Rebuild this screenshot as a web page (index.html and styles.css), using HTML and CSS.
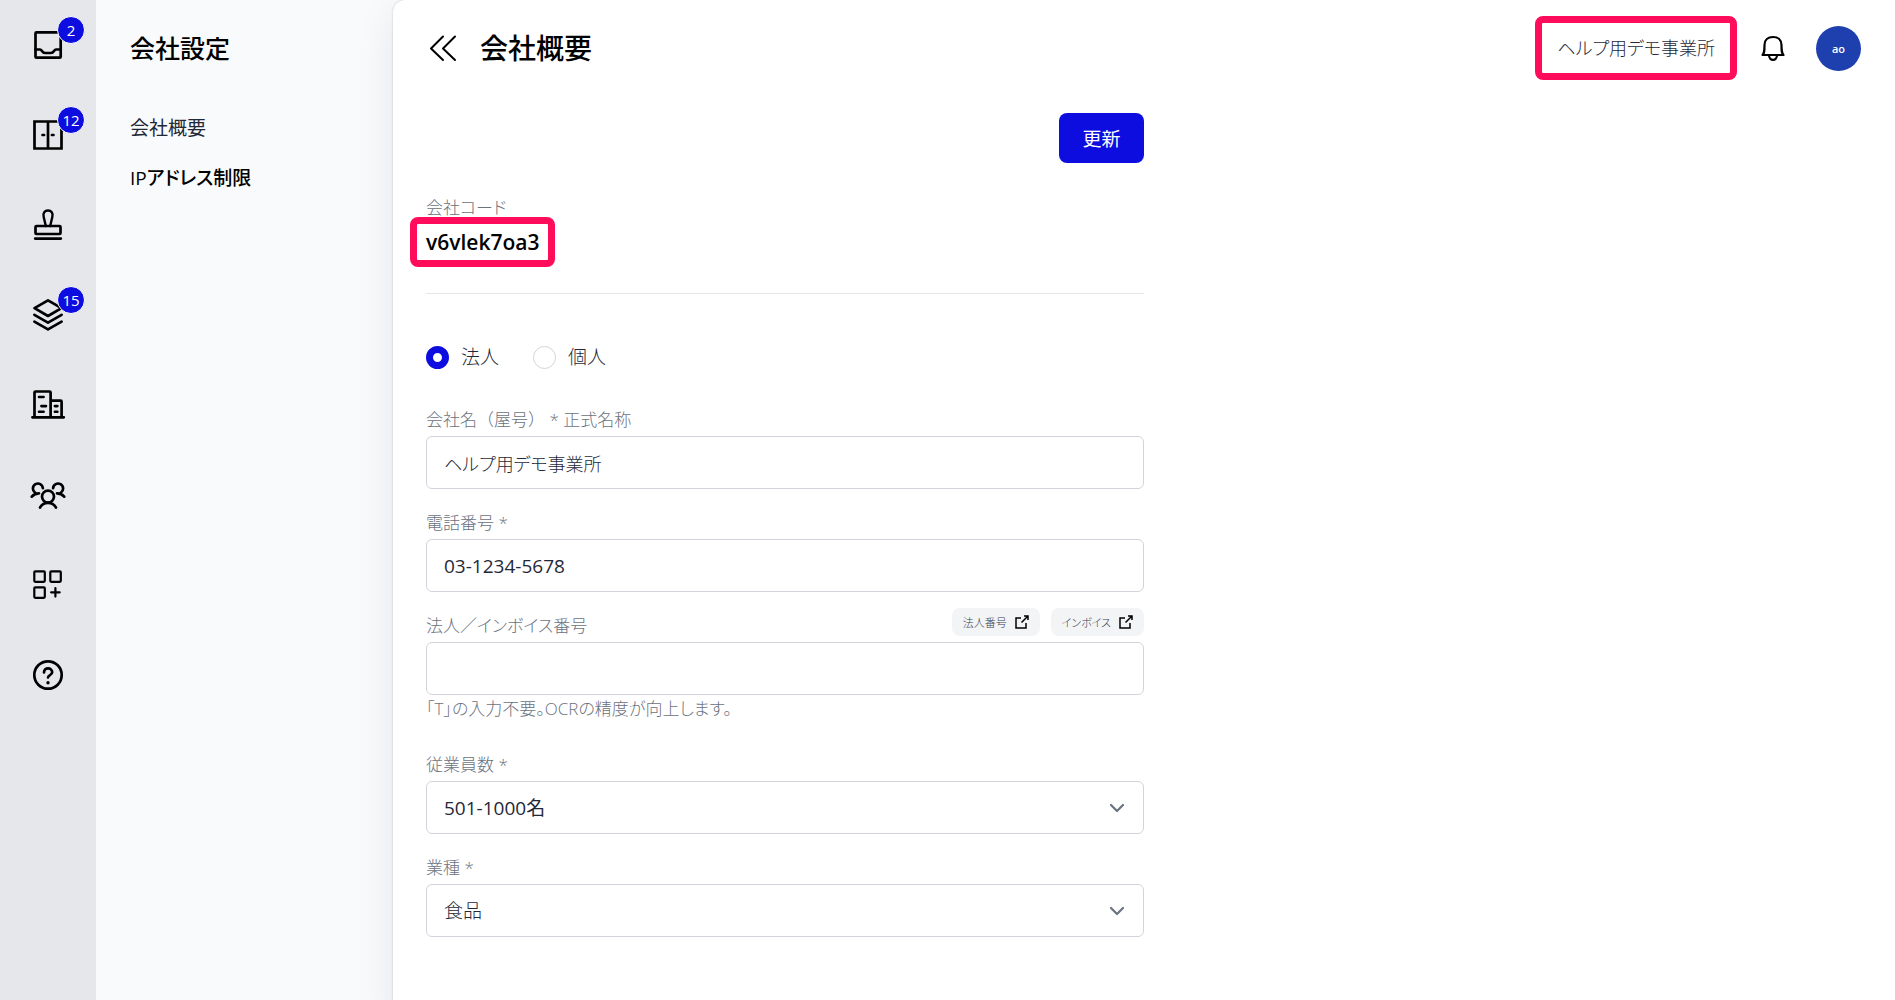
FILE: index.html
```html
<!DOCTYPE html>
<html lang="ja">
<head>
    <meta charset="UTF-8">
    <meta name="viewport" content="width=device-width, initial-scale=1">
    <title>会社概要</title>
    <link rel="stylesheet" href="styles.css">
</head>
<body>
    <div class="app">
        <nav class="rail">
            <a href="#" class="rail-link" aria-label="受信箱">
                <svg viewBox="0 0 36 36" class="icon">
                    <rect x="5.5" y="5.3" width="25.2" height="25.4" rx="1"/>
                    <path d="M5.5 22.5H10C12 22.5 12 26 15 26H21C24 26 24 22.5 26 22.5H30.5"/>
                </svg>
                <span class="badge">2</span>
            </a>
            <a href="#" class="rail-link" aria-label="書庫">
                <svg viewBox="0 0 36 36" class="icon">
                    <path d="M4.5 4.5H31.5V31.5H4.5ZM18 4.5V31.5" stroke-linejoin="miter"/>
                    <path d="M12.4 18H14.2M21.8 18H23.6" stroke-width="2.4"/>
                </svg>
                <span class="badge">12</span>
            </a>
            <a href="#" class="rail-link" aria-label="承認">
                <svg viewBox="0 0 36 36" class="icon">
                    <path d="M15.8 19L13.7 10C12.6 6 14.8 3.5 18 3.5S23.4 6 22.3 10L20.2 19" stroke-width="2.4"/>
                    <rect x="5.5" y="19" width="25" height="8" rx="1"/>
                    <path d="M5.2 31.6H30.8"/>
                </svg>
            </a>
            <a href="#" class="rail-link" aria-label="レイヤー">
                <svg viewBox="0 0 36 36" class="icon">
                    <path d="M18 3.3L31.5 11.2L18 19L4.5 11.2Z"/>
                    <path d="M4.4 17.8L18 25.7L31.6 17.8M4.4 24.7L18 32.4L31.6 24.7"/>
                </svg>
                <span class="badge">15</span>
            </a>
            <a href="#" class="rail-link" aria-label="会社">
                <svg viewBox="0 0 36 36" class="icon">
                    <path d="M4.5 30.3V5.5Q4.5 4.5 5.5 4.5H19.6Q20.6 4.5 20.6 5.5V30.3M20.6 13.7H30.6Q31.6 13.7 31.6 14.7V30.3M2.4 30.3H33.8"/>
                    <path d="M9 10H13.6M11.4 19.1H16M9 24.7H13.6M24.9 19.1H27.4M24.9 24.7H27.4" stroke-width="2.6"/>
                </svg>
            </a>
            <a href="#" class="rail-link" aria-label="メンバー">
                <svg viewBox="0 0 36 36" class="icon">
                    <circle cx="18" cy="19.6" r="6"/>
                    <path d="M10 30.6C11.5 27.5 14 25.8 18 25.8S24.5 27.5 26 30.6"/>
                    <path d="M12.9 11.2A5 5 0 1 0 5 15.6M9 16.3C5.5 16.3 3.5 17.6 1.8 19.6"/>
                    <path d="M23.1 11.2A5 5 0 1 1 31 15.6M27 16.3C30.5 16.3 32.5 17.6 34.2 19.6"/>
                </svg>
            </a>
            <a href="#" class="rail-link" aria-label="アプリ追加">
                <svg viewBox="0 0 36 36" class="icon icon-thin">
                    <rect x="4.3" y="4.3" width="10.5" height="10.5" rx="1"/>
                    <rect x="20.3" y="4.3" width="10.5" height="10.5" rx="1"/>
                    <rect x="4.3" y="20.3" width="10.5" height="10.5" rx="1"/>
                    <path d="M25.4 21V29.6M21.1 25.3H29.7"/>
                </svg>
            </a>
            <a href="#" class="rail-link" aria-label="ヘルプ">
                <svg viewBox="0 0 36 36" class="icon">
                    <circle cx="18" cy="18" r="13.7"/>
                    <path d="M14 15.5C14 9.8 22.2 10.3 22.2 15.3C22.2 18.3 18 17.8 18 20.5"/>
                    <path d="M18 25.7V25.8" stroke-width="3.4"/>
                </svg>
            </a>
        </nav>

        <aside class="submenu">
            <h2 class="submenu-title">会社設定</h2>
            <a href="#" class="submenu-link">会社概要</a>
            <a href="#" class="submenu-link strong">IPアドレス制限</a>
        </aside>

        <main class="main">
            <header class="header">
                <button type="button" class="icon-button" aria-label="戻る">
                    <svg viewBox="0 0 28 28" class="collapse-icon">
                        <path d="M14 2.5L2 14.5L14 26M26 2.5L14 14.5L26 26"/>
                    </svg>
                </button>
                <h1 class="page-title">会社概要</h1>
                <div class="header-right">
                    <span class="mark office">ヘルプ用デモ事業所</span>
                    <button type="button" class="icon-button" aria-label="通知">
                        <svg viewBox="0 0 28 28" class="bell-icon">
                            <path d="M3.5 21C5.5 19 5.5 17 5.5 11C5.5 6 9 3 14 3S22.5 6 22.5 11C22.5 17 22.5 19 24.5 21Z"/>
                            <path d="M10 21C10 27.5 18 27.5 18 21"/>
                        </svg>
                    </button>
                    <button type="button" class="avatar">ao</button>
                </div>
            </header>

            <form class="form">
                <div class="actions">
                    <button type="submit" class="submit">更新</button>
                </div>

                <div class="code">
                    <div class="label">会社コード</div>
                    <div class="mark code-value">v6vlek7oa3</div>
                </div>

                <div class="radios">
                    <label class="radio"><input type="radio" name="kind" checked>法人</label>
                    <label class="radio"><input type="radio" name="kind">個人</label>
                </div>

                <div class="field">
                    <label class="label full" for="company">会社名（屋号） * 正式名称</label>
                    <input class="control name" id="company" type="text" value="ヘルプ用デモ事業所">
                </div>
                <div class="field">
                    <label class="label" for="tel">電話番号 *</label>
                    <input class="control" id="tel" type="tel" value="03-1234-5678">
                </div>
                <div class="field">
                    <div class="label-row">
                        <label class="label" for="number">法人／インボイス番号</label>
                        <div class="chips">
                            <a href="#" class="chip">法人番号
                                <svg viewBox="0 0 14 14" class="link-icon"><path d="M6 3H1V13H11V8M9 1H13V5M13 1L6.5 7.5"/></svg>
                            </a>
                            <a href="#" class="chip">インボイス
                                <svg viewBox="0 0 14 14" class="link-icon"><path d="M6 3H1V13H11V8M9 1H13V5M13 1L6.5 7.5"/></svg>
                            </a>
                        </div>
                    </div>
                    <input class="control" id="number" type="text">
                    <p class="help">「T」の入力不要。OCRの精度が向上します。</p>
                </div>
                <div class="field">
                    <label class="label" for="employees">従業員数 *</label>
                    <div class="select">
                        <select class="control" id="employees"><option>501-1000名</option></select>
                        <svg viewBox="0 0 16 16" class="chevron"><path d="M2 5L8 11L14 5"/></svg>
                    </div>
                </div>
                <div class="field">
                    <label class="label" for="industry">業種 *</label>
                    <div class="select">
                        <select class="control light" id="industry"><option>食品</option></select>
                        <svg viewBox="0 0 16 16" class="chevron"><path d="M2 5L8 11L14 5"/></svg>
                    </div>
                </div>
            </form>
        </main>
    </div>
</body>
</html>
```
FILE: styles.css
```css
* {
    box-sizing: border-box;
}

body {
    margin: 0;
    font-family: "Open Sans", "Noto Sans CJK JP", sans-serif;
    font-size: 19px;
    font-feature-settings: "palt";
    color: #1f2937;
    background-color: #f9fafc;
}

h1, h2, p {
    margin: 0;
}

a {
    color: inherit;
    text-decoration: none;
}

button, input, select {
    font: inherit;
    font-feature-settings: inherit;
    color: inherit;
}

button {
    padding: 0;
    border: 0;
    background: none;
    cursor: pointer;
}

svg {
    display: block;
    fill: none;
    stroke: #000;
    stroke-linecap: round;
    stroke-linejoin: round;
}

.app {
    display: flex;
    min-height: 100vh;
}

/* left icon rail */
.rail {
    display: flex;
    flex-direction: column;
    align-items: center;
    gap: 54px;
    width: 96px;
    padding-top: 27px;
    background-color: #e5e7eb;
}

.rail-link {
    position: relative;
}

.icon {
    width: 36px;
    height: 36px;
    stroke-width: 2.7;
}

.icon-thin {
    stroke-width: 2.2;
}

.badge {
    position: absolute;
    top: -11px;
    left: 27px;
    width: 28px;
    height: 28px;
    border: 1px solid #fff;
    border-radius: 50%;
    background-color: #0d0ddf;
    color: #fff;
    font-size: 15px;
    line-height: 26px;
    text-align: center;
}

/* settings submenu */
.submenu {
    width: 297px;
    padding: 23px 34px;
}

.submenu-title {
    margin-bottom: 30px;
    color: #000;
    font-size: 25px;
    font-weight: 500;
    line-height: 50px;
}

.submenu-link {
    display: block;
    line-height: 50px;
}

.submenu-link.strong {
    color: #000;
    font-weight: 500;
}

.main {
    flex: 1;
    padding: 0 34px 60px 33px;
    border-top-left-radius: 12px;
    background-color: #fff;
    box-shadow: 0 0 2px rgba(17, 24, 39, 0.25), 0 10px 40px rgba(17, 24, 39, 0.08);
}

.header {
    display: flex;
    align-items: center;
    height: 96px;
}

.collapse-icon {
    width: 28px;
    height: 28px;
    margin-left: 3px;
    stroke-width: 2;
}

.page-title {
    margin-left: 23px;
    color: #000;
    font-size: 28px;
    font-weight: 500;
    line-height: 40px;
}

.header-right {
    display: flex;
    align-items: center;
    margin-left: auto;
}

/* highlighted value */
.mark {
    border: 7px solid #ff0d5b;
    border-radius: 8px;
}

.office {
    margin-right: 22px;
    padding: 0 15px;
    font-size: 18px;
    font-weight: 300;
    line-height: 50px;
}

.bell-icon {
    width: 28px;
    height: 28px;
    stroke-width: 2.2;
}

.avatar {
    width: 45px;
    height: 45px;
    margin-left: 29px;
    border-radius: 50%;
    background-color: #1e40af;
    color: #fff;
    font-size: 11px;
    font-weight: 600;
}

.form {
    max-width: 718px;
    padding-top: 17px;
}

.actions {
    display: flex;
    justify-content: flex-end;
}

.submit {
    width: 85px;
    height: 50px;
    border-radius: 8px;
    background-color: #0d0ddf;
    color: #fff;
}

.label {
    display: block;
    padding-bottom: 6px;
    color: #6b7280;
    font-size: 17px;
    font-weight: 300;
    line-height: 20px;
}

.label.full {
    font-feature-settings: normal;
}

.code {
    padding: 35px 0 26px;
    border-bottom: 1px solid #e5e7eb;
}

.code .label {
    padding: 0;
    line-height: 19px;
}

.code-value {
    width: fit-content;
    margin-left: -16px;
    padding: 0 9px;
    color: #000;
    font-size: 21px;
    font-weight: 600;
    line-height: 36px;
}

.radios {
    display: flex;
    gap: 34px;
    padding: 48px 0 38px;
}

.radio {
    display: flex;
    align-items: center;
    gap: 12px;
    font-weight: 300;
    line-height: 30px;
}

.radio input {
    appearance: none;
    width: 23px;
    height: 23px;
    margin: 0;
    border: 1px solid #d1d5db;
    border-radius: 50%;
}

.radio input:checked {
    border: 7px solid #0d0ddf;
}

.field {
    margin-bottom: 24px;
}

.control {
    display: block;
    width: 100%;
    height: 53px;
    padding: 0 17px;
    border: 1px solid #d1d5db;
    border-radius: 6px;
    background-color: #fff;
    appearance: none;
}

.control.name {
    font-size: 18px;
    font-weight: 300;
}

.control.light {
    font-weight: 300;
}

.label-row {
    display: flex;
    justify-content: space-between;
}

.chips {
    display: flex;
    gap: 11px;
    margin: -8px 0 6px;
}

.chip {
    display: flex;
    align-items: center;
    gap: 8px;
    height: 28px;
    padding: 0 11px;
    border-radius: 8px;
    background-color: #f3f4f6;
    color: #374151;
    font-size: 11px;
    font-weight: 300;
}

.link-icon {
    width: 14px;
    height: 14px;
    stroke-linecap: butt;
    stroke-linejoin: miter;
    stroke-width: 1.5;
}

.help {
    padding-bottom: 8px;
    color: #6b7280;
    font-size: 17px;
    font-weight: 300;
    line-height: 28px;
}

.select {
    position: relative;
}

.chevron {
    position: absolute;
    top: 19px;
    right: 19px;
    width: 16px;
    height: 16px;
    stroke: #6b7280;
    stroke-width: 2.2;
    pointer-events: none;
}
```
